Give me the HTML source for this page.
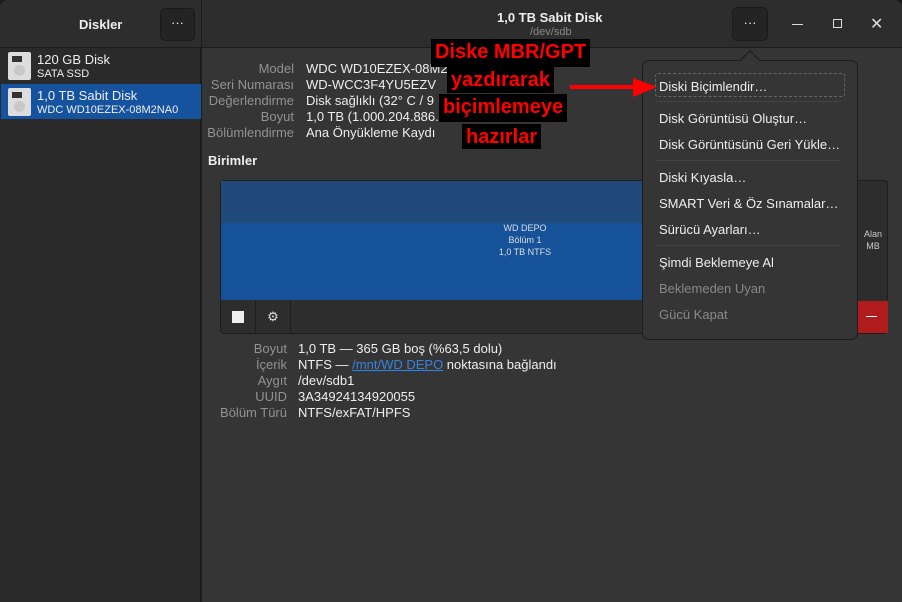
<!DOCTYPE html><html><head><meta charset="utf-8"><style>
*{margin:0;padding:0;box-sizing:border-box}
body{width:902px;height:602px;background:#1a1a1a;font-family:"Liberation Sans",sans-serif;position:relative;overflow:hidden;color:#eee}
.win{position:absolute;left:0;top:0;width:902px;height:602px;background:#353535;border-radius:8px 8px 0 0;overflow:hidden}
.abs{position:absolute}
.side{left:0;top:0;width:201px;height:602px;background:#2a2a2a;border-right:1px solid #1c1c1c}
.hdr{left:0;top:0;width:902px;height:48px;background:#2d2d2d;border-bottom:1px solid #1c1c1c}
.lab{color:#929292;font-size:13px;text-align:right}
.val{font-size:13px;color:#eee}
.btn{background:#242424;border:1px solid #1a1a1a;border-radius:5px}
.ann{background:#000;color:#f00;font-weight:bold;font-size:20px;line-height:26px;padding:0 4px;position:absolute}
.mi{position:absolute;left:659px;font-size:13px;color:#eee}
.sep{position:absolute;left:655px;width:186px;height:1px;background:#444}
</style></head><body><div class="win">
<div class="abs side"></div>
<div class="abs hdr"></div>
<div class="abs" style="left:201px;top:0;width:1px;height:602px;background:#1c1c1c"></div>
<div class="abs" style="left:79px;top:17px;font-weight:bold;font-size:13px">Diskler</div>
<div class="abs btn" style="left:160px;top:8px;width:35px;height:33px;text-align:center;line-height:28px;font-size:13px">···</div>
<div class="abs" style="left:497px;top:10px;font-weight:bold;font-size:13px">1,0 TB Sabit Disk</div>
<div class="abs" style="left:530px;top:26px;font-size:11px;color:#888">/dev/sdb</div>
<div class="abs btn" style="left:732px;top:7px;width:36px;height:34px;text-align:center;line-height:30px;font-size:13px">···</div>
<div class="abs" style="left:792px;top:24px;width:11px;height:1px;background:#ddd"></div>
<div class="abs" style="left:833px;top:19px;width:9px;height:9px;border:1.5px solid #ddd"></div>
<div class="abs" style="left:870px;top:14px;font-size:16px;color:#ddd">✕</div>
<!-- sidebar items -->
<div class="abs" style="left:8px;top:52px;width:23px;height:28px;background:#ddd;border-radius:2px"><div style="position:absolute;left:4px;top:4px;width:10px;height:6px;background:#333"></div><div style="position:absolute;left:6px;top:13px;width:11px;height:11px;border-radius:50%;background:#c8c8c8"></div></div>
<div class="abs" style="left:37px;top:52px;font-size:13px">120 GB Disk</div>
<div class="abs" style="left:37px;top:68px;font-size:11px">SATA SSD</div>
<div class="abs" style="left:1px;top:84px;width:200px;height:35px;background:#15539e"></div>
<div class="abs" style="left:8px;top:88px;width:23px;height:28px;background:#ddd;border-radius:2px"><div style="position:absolute;left:4px;top:4px;width:10px;height:6px;background:#333"></div><div style="position:absolute;left:6px;top:13px;width:11px;height:11px;border-radius:50%;background:#c8c8c8"></div></div>
<div class="abs" style="left:37px;top:88px;font-size:13px">1,0 TB Sabit Disk</div>
<div class="abs" style="left:37px;top:104px;font-size:11px">WDC WD10EZEX-08M2NA0</div>
<!-- info -->
<div class="abs lab" style="left:202px;top:61px;width:92px;line-height:16px">Model<br>Seri Numarası<br>Değerlendirme<br>Boyut<br>Bölümlendirme</div>
<div class="abs val" style="left:306px;top:61px;line-height:16px">WDC WD10EZEX-08M2<br>WD-WCC3F4YU5EZV<br>Disk sağlıklı (32° C / 9<br>1,0 TB (1.000.204.886.<br>Ana Önyükleme Kaydı</div>
<div class="abs" style="left:208px;top:153px;font-weight:bold;font-size:13px">Birimler</div>
<div class="abs" style="left:220px;top:180px;width:668px;height:154px;background:#2d2d2d;border:1px solid #1e1e1e;border-radius:4px"></div>
<div class="abs" style="left:221px;top:181px;width:637px;height:42px;background:#21497a"></div>
<div class="abs" style="left:221px;top:223px;width:637px;height:77px;background:#16529a"></div>
<div class="abs" style="left:440px;top:222px;width:170px;text-align:center;font-size:9px;line-height:12px;color:#ddd">WD DEPO<br>Bölüm 1<br>1,0 TB NTFS</div>
<div class="abs" style="left:858px;top:228px;font-size:9px;line-height:12px;color:#ccc;text-align:center;width:30px">Alan<br>MB</div>
<div class="abs" style="left:858px;top:301px;width:30px;height:32px;background:#b01c1c"></div>
<div class="abs" style="left:866px;top:316px;width:11px;height:1px;background:#fff"></div>
<div class="abs" style="left:221px;top:300px;width:35px;height:33px;border-right:1px solid #1e1e1e"></div>
<div class="abs" style="left:232px;top:311px;width:12px;height:12px;background:#eee"></div>
<div class="abs" style="left:256px;top:300px;width:35px;height:33px;border-right:1px solid #1e1e1e;text-align:center;line-height:33px;font-size:13px;color:#ddd">⚙</div>
<div class="abs lab" style="left:205px;top:341px;width:82px;line-height:16px">Boyut<br>İçerik<br>Aygıt<br>UUID<br>Bölüm Türü</div>
<div class="abs val" style="left:298px;top:341px;line-height:16px">1,0 TB — 365 GB boş (%63,5 dolu)<br>NTFS — <span style="color:#3584e4;text-decoration:underline">/mnt/WD DEPO</span> noktasına bağlandı<br>/dev/sdb1<br>3A34924134920055<br>NTFS/exFAT/HPFS</div>
<!-- menu -->
<div class="abs" style="left:642px;top:60px;width:216px;height:280px;background:#353535;border:1px solid #1c1c1c;border-radius:7px"></div>
<div class="abs" style="left:743px;top:53px;width:14px;height:14px;background:#353535;border-left:1px solid #1c1c1c;border-top:1px solid #1c1c1c;transform:rotate(45deg)"></div>
<div class="abs" style="left:655px;top:73px;width:190px;height:24px;border:1px dashed #666;border-radius:3px"></div>
<div class="mi" style="top:79px">Diski Biçimlendir…</div>
<div class="sep" style="top:101px"></div>
<div class="mi" style="top:111px">Disk Görüntüsü Oluştur…</div>
<div class="mi" style="top:137px">Disk Görüntüsünü Geri Yükle…</div>
<div class="sep" style="top:160px"></div>
<div class="mi" style="top:170px">Diski Kıyasla…</div>
<div class="mi" style="top:196px">SMART Veri &amp; Öz Sınamalar…</div>
<div class="mi" style="top:222px">Sürücü Ayarları…</div>
<div class="sep" style="top:245px"></div>
<div class="mi" style="top:255px">Şimdi Beklemeye Al</div>
<div class="mi" style="top:281px;color:#888">Beklemeden Uyan</div>
<div class="mi" style="top:307px;color:#888">Gücü Kapat</div>
<!-- annotations -->
<div class="ann" style="left:431px;top:39px;height:28px">Diske MBR/GPT</div>
<div class="ann" style="left:447px;top:67px;height:26px">yazdırarak</div>
<div class="ann" style="left:439px;top:94px;height:28px">biçimlemeye</div>
<div class="ann" style="left:462px;top:124px;height:25px">hazırlar</div>
<svg class="abs" style="left:565px;top:76px" width="95" height="24"><line x1="5" y1="11" x2="72" y2="11" stroke="#f00" stroke-width="4"/><polygon points="68,2 92,11 68,21" fill="#f00"/></svg>
</div></body></html>
